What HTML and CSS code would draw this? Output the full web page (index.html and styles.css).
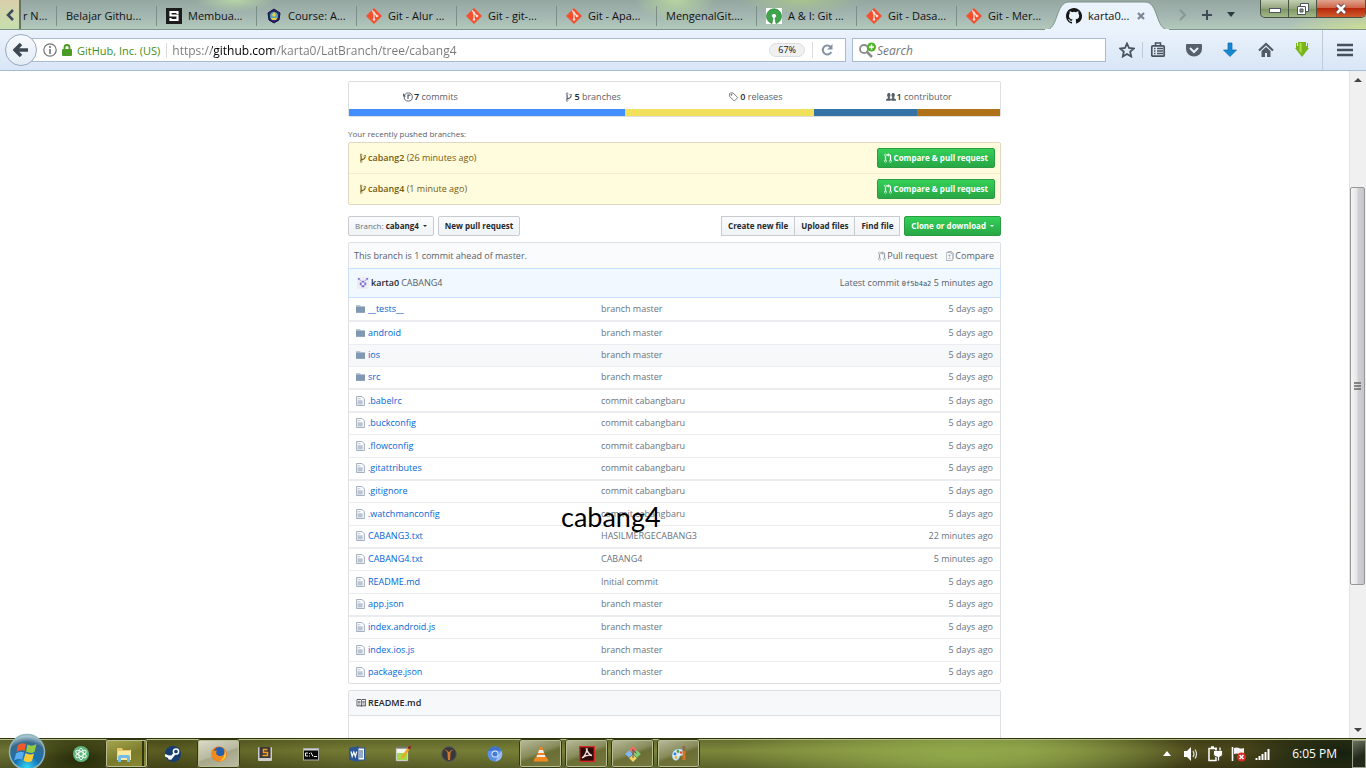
FILE: index.html
```html
<!DOCTYPE html>
<html lang="en">
<head>
<meta charset="utf-8">
<title>karta0/LatBranch at cabang4</title>
<link rel="stylesheet" href="styles.css">
</head>
<body>
<svg class="defs" aria-hidden="true">
  <symbol id="branch" viewBox="0 0 10 16"><path d="M10 5c0-1.110-.89-2-2-2a1.993 1.993 0 0 0-1 3.720v.3c-.02.520-.230.980-.630 1.380-.4.4-.860.610-1.380.630-.830.020-1.480.160-2 .450V4.720a1.993 1.993 0 0 0-1-3.720C.88 1 0 1.890 0 3a2 2 0 0 0 1 1.720v6.560c-.590.350-1 .990-1 1.720 0 1.110.89 2 2 2 1.110 0 2-.89 2-2 0-.530-.2-1-.530-1.360.090-.060.480-.410.590-.470.250-.110.560-.170.940-.170 1.050-.050 1.950-.450 2.750-1.250S8.950 7.770 9 6.730h-.020C9.590 6.370 10 5.730 10 5zM2 1.800c.660 0 1.200.550 1.200 1.200 0 .650-.550 1.200-1.200 1.200C1.350 4.200.8 3.650.8 3c0-.650.550-1.200 1.200-1.200zm0 12.410c-.660 0-1.200-.550-1.200-1.200 0-.650.550-1.200 1.200-1.200.650 0 1.200.550 1.200 1.200 0 .650-.550 1.200-1.200 1.200zm6-8c-.660 0-1.200-.550-1.200-1.200 0-.650.550-1.200 1.200-1.200.650 0 1.200.550 1.200 1.200 0 .650-.550 1.200-1.200 1.200z"/></symbol>
  <symbol id="pull" viewBox="0 0 12 16"><path d="M11 11.280V5c-.030-.780-.340-1.470-.940-2.060C9.460 2.350 8.780 2.030 8 2H7V0L4 3l3 3V4h1c.270.020.480.110.690.310.210.200.300.420.310.690v6.280A1.993 1.993 0 0 0 10 15a1.993 1.993 0 0 0 1-3.720zm-1 2.920c-.660 0-1.200-.550-1.200-1.200 0-.650.550-1.200 1.200-1.200.650 0 1.200.550 1.200 1.200 0 .650-.550 1.200-1.200 1.200zM4 3c0-1.110-.89-2-2-2a1.993 1.993 0 0 0-1 3.720v6.560A1.993 1.993 0 0 0 2 15a1.993 1.993 0 0 0 1-3.720V4.720c.590-.340 1-.980 1-1.720zm-.8 10c0 .660-.550 1.200-1.200 1.200-.650 0-1.200-.550-1.200-1.200 0-.650.550-1.200 1.200-1.200.650 0 1.200.550 1.200 1.200zM2 4.200C1.340 4.200.8 3.650.8 3c0-.650.550-1.200 1.200-1.200.650 0 1.200.550 1.200 1.200 0 .650-.550 1.200-1.200 1.200z"/></symbol>
  <symbol id="history" viewBox="0 0 16 16"><path d="M7 4h5v2H9v5H7z"/><circle cx="8.500" cy="8" r="6.500" fill="none" stroke="currentColor" stroke-width="1.500"/><path d="M0 2v5h5z"/></symbol>
  <symbol id="tag" viewBox="0 0 16 16"><path fill="none" stroke="currentColor" stroke-width="1.300" d="M1 2.500V7l7.500 7.500L14 9 6.500 1.500H2z"/><circle cx="4" cy="4.500" r="1.300"/></symbol>
  <symbol id="people" viewBox="0 0 16 16"><path d="M0 14v-2l3-2V8C1 6 1.500 1.500 4.500 1.500S8 6 6 8v2l2 1 2-1V8C8 6 8.500 1.500 11.500 1.500S15 6 13 8v2l3 2v2H8.500v-1.500h-1V14z"/></symbol>
  <symbol id="folder" viewBox="0 0 14 14"><path d="M0 1h7v2H0z" opacity=".6"/><path d="M0 3h14v10H0z"/></symbol>
  <symbol id="file" viewBox="0 0 12 14"><path d="M.6.6H8L11.400 4v9.400H.6z" fill="none" stroke="currentColor" stroke-width="1.200"/><path opacity=".6" d="M2 3h4v1.500H2zM2 6h7v6H2z"/></symbol>
  <symbol id="diff" viewBox="0 0 13 16"><path d="M6 7h2v1H6v2H5V8H3V7h2V5h1v2zm-3 6h5v-1H3v1zM7.500 2L11 5.500V15c0 .550-.450 1-1 1H1c-.550 0-1-.450-1-1V3c0-.550.450-1 1-1h6.500zM10 6L7 3H1v12h9V6zM8.500 0H3v1h5l4 4v8h1V4.500L8.500 0z"/></symbol>
  <symbol id="book" viewBox="0 0 16 16"><path d="M3 5h4v1H3V5zm0 3h4V7H3v1zm0 2h4V9H3v1zm11-5h-4v1h4V5zm0 2h-4v1h4V7zm0 2h-4v1h4V9zm2-6v9c0 .550-.450 1-1 1H9.500l-1 1-1-1H2c-.550 0-1-.450-1-1V3c0-.550.450-1 1-1h5.500l1 1 1-1H15c.550 0 1 .450 1 1zM8 3.500L7.500 3H2v9h6V3.500zm7-.5H9.500l-.5.5V12h6V3z"/></symbol>
  <symbol id="git" viewBox="0 0 16 16"><path fill="#f4502f" d="M8 0l8 8-8 8-8-8z"/><path fill="none" stroke="#f3ddd6" stroke-width="1.200" d="M6 2.500l2 2v7M8 5l3 3"/><g fill="#f3ddd6"><circle cx="8" cy="5" r="1.300"/><circle cx="11" cy="8" r="1.300"/><circle cx="8" cy="11.500" r="1.300"/></g></symbol>
</svg>

<header class="tabstrip">
  <button class="scroll-left" aria-label="Scroll tabs left"><svg width="8" height="12" viewBox="0 0 8 12"><path d="M7 1L2 6l5 5" fill="none" stroke="#3d4a5c" stroke-width="2.500"/></svg></button>
  <nav class="tabs" aria-label="Tabs">
    <button class="tab first">r N...</button>
    <button class="tab">Belajar Githu...</button>
    <button class="tab"><svg class="fav" viewBox="0 0 16 16"><rect width="16" height="16" fill="#1c1c1c"/><path d="M11.500 6V4h-7v3.500h7V12h-7v-2" fill="none" stroke="#fff" stroke-width="2.200"/></svg>Membua...</button>
    <button class="tab"><svg class="fav" viewBox="0 0 16 16"><path d="M8 1l6 4-1 7-5 3-5-3-1-7z" fill="#29246c" stroke="#17123d"/><circle cx="8" cy="8" r="4" fill="#58a6b0"/><path d="M8 4l2 3-2 2-2-2zM5 10h6l-1 2H6z" fill="#f0cc3f"/></svg>Course: A...</button>
    <button class="tab"><svg class="fav"><use href="#git"/></svg>Git - Alur ...</button>
    <button class="tab"><svg class="fav"><use href="#git"/></svg>Git - git-...</button>
    <button class="tab"><svg class="fav"><use href="#git"/></svg>Git - Apa...</button>
    <button class="tab">MengenalGit....</button>
    <button class="tab"><svg class="fav" viewBox="0 0 16 16"><rect width="16" height="16" fill="#fff"/><path d="M6 15.500A7.500 7.500 0 1 1 10 15.500L9 10a2.400 2.400 0 1 0-2 0z" fill="#3da64a" stroke="#247a31" stroke-width=".6"/></svg>A &amp; I: Git ...</button>
    <button class="tab"><svg class="fav"><use href="#git"/></svg>Git - Dasa...</button>
    <button class="tab last"><svg class="fav"><use href="#git"/></svg>Git - Mer...</button>
    <div class="tab-active">
      <svg class="tab-shape" viewBox="0 0 124 30" preserveAspectRatio="none"><path d="M0 30C14 30 10 2 24 2h76c14 0 10 28 24 28z" fill="#eaf2fb" stroke="#7f9488"/><path d="M0 30h124" stroke="#eaf2fb" stroke-width="2"/></svg>
      <svg class="fav" viewBox="0 0 16 16"><path fill="#161616" d="M8 0C3.580 0 0 3.580 0 8c0 3.540 2.290 6.530 5.470 7.590.4.070.550-.170.550-.380v-1.490c-2.010.370-2.530-.490-2.690-.940-.090-.230-.480-.940-.820-1.130-.280-.150-.680-.520-.010-.530.630-.010 1.080.580 1.230.820.720 1.210 1.870.870 2.330.660.070-.520.280-.870.510-1.070-1.780-.2-3.640-.890-3.640-3.950 0-.870.310-1.590.820-2.150-.080-.2-.360-1.020.080-2.120 0 0 .670-.210 2.200.820a7.500 7.500 0 0 1 4 0c1.530-1.040 2.200-.820 2.200-.820.440 1.100.160 1.920.080 2.120.510.560.820 1.270.820 2.150 0 3.070-1.870 3.750-3.650 3.950.290.250.540.730.540 1.480v2.200c0 .210.150.460.550.380A8 8 0 0 0 8 0z"/></svg>
      <span class="tab-title">karta0...</span>
      <button class="tab-close" aria-label="Close tab"><svg width="8" height="8" viewBox="0 0 8 8"><path d="M1 1l6 6M7 1L1 7" stroke="#7c8796" stroke-width="2.200"/></svg></button>
    </div>
  </nav>
  <div class="tab-tools">
    <svg width="8" height="12" viewBox="0 0 8 12"><path d="M1 1l5 5-5 5" fill="none" stroke="#88978f" stroke-width="2"/></svg>
    <button aria-label="New tab"><svg width="10" height="10" viewBox="0 0 10 10"><path d="M5 0v10M0 5h10" stroke="#3f4c55" stroke-width="2"/></svg></button>
    <button aria-label="List all tabs"><svg width="8" height="5" viewBox="0 0 8 5"><path d="M0 0h8L4 5z" fill="#2e3a40"/></svg></button>
  </div>
  <div class="window-buttons">
    <button aria-label="Minimize"><svg width="14" height="14" viewBox="0 0 14 14"><rect x="1.500" y="6.500" width="11" height="4" fill="#fff" stroke="#4d5560"/></svg></button>
    <button aria-label="Restore"><svg width="14" height="14" viewBox="0 0 14 14"><path d="M4.500 1.500h8v8h-8z" fill="#fff" stroke="#4d5560"/><path d="M1.500 4.500h8v8h-8z" fill="#fff" stroke="#4d5560"/><path d="M4 7h3v3H4z" fill="#8a9a70" stroke="#4d5560"/></svg></button>
    <button class="close" aria-label="Close window"><svg width="14" height="12" viewBox="0 0 14 12"><path d="M3 2l8 8M11 2l-8 8" stroke="#5b3a40" stroke-width="4.500"/><path d="M3 2l8 8M11 2l-8 8" stroke="#fff" stroke-width="2.600"/></svg></button>
  </div>
</header>

<div class="navbar">
  <button class="back" aria-label="Back"><svg width="16" height="14" viewBox="0 0 16 14"><path d="M15 7H4M8 1L2 7l6 6" fill="none" stroke="#3d4853" stroke-width="3.500"/></svg></button>
  <div class="urlbar">
    <svg width="14" height="14" viewBox="0 0 14 14"><circle cx="7" cy="7" r="6.200" fill="none" stroke="#737373" stroke-width="1.200"/><path d="M7 3v2M7 6v5" stroke="#737373" stroke-width="1.600"/></svg>
    <svg width="10" height="12" viewBox="0 0 10 12"><path d="M2.500 6V3.500a2.500 2.500 0 0 1 5 0V6" fill="none" stroke="#4b9a26" stroke-width="1.800"/><rect y="5" width="10" height="7" rx="1" fill="#4b9a26"/></svg>
    <span class="identity">GitHub, Inc. (US)</span>
    <input class="url" type="text" aria-label="Address" value="https://github.com/karta0/LatBranch/tree/cabang4">
    <button class="zoom">67%</button>
    <button class="reload" aria-label="Reload"><svg width="12" height="12" viewBox="0 0 12 12"><path d="M9.500 2.800A4.500 4.500 0 1 0 10.300 8" fill="none" stroke="#8592a3" stroke-width="2"/><path d="M11.500 0v5.500H6z" fill="#8592a3"/></svg></button>
  </div>
  <label class="searchbar">
    <svg width="18" height="16" viewBox="0 0 18 16"><circle cx="5" cy="7" r="4" fill="none" stroke="#8b8b8b" stroke-width="1.800"/><path d="M8 10l5 5" stroke="#8b8b8b" stroke-width="2.500"/><circle cx="12.500" cy="5" r="4.500" fill="#4fb32a"/><path d="M12.500 2.500v5M10 5h5" stroke="#fff" stroke-width="1.500"/></svg>
    <input type="search" placeholder="Search" aria-label="Search">
  </label>
  <div class="nav-tools">
    <button aria-label="Bookmark"><svg viewBox="0 0 16 16"><path d="M8 1.500l2 4.500 4.800.5-3.600 3.200 1 4.800L8 12l-4.200 2.500 1-4.800L1.200 6.500 6 6z" fill="none" stroke="#47525e" stroke-width="1.800"/></svg></button>
    <button class="list" aria-label="Bookmarks list"><svg viewBox="0 0 16 16"><path d="M5.500 3V1h5v2" fill="none" stroke="#47525e" stroke-width="1.600"/><rect x="1.800" y="3.800" width="12.400" height="10.400" rx="1" fill="none" stroke="#47525e" stroke-width="1.700"/><path d="M4 6.500h1.500M7 6.500h6M4 9h1.500M7 9h6M4 11.500h1.500M7 11.500h6" stroke="#47525e" stroke-width="1.300"/></svg></button>
    <button aria-label="Pocket"><svg viewBox="0 0 16 16"><path d="M1 2h14q1 0 1 1v4a8 7.500 0 0 1-16 0V3q0-1 1-1z" fill="#56606c"/><path d="M4 6l4 4 4-4" fill="none" stroke="#e6effa" stroke-width="2"/></svg></button>
    <button aria-label="Downloads"><svg viewBox="0 0 16 16"><path d="M6 1h4v7h4.500L8 14.500 1.500 8H6z" fill="#1489d3" stroke="#0d66a8" stroke-width=".7"/></svg></button>
    <button aria-label="Home"><svg viewBox="0 0 16 16"><path d="M1 8.500L8 2l7 6.500" fill="none" stroke="#505b67" stroke-width="2.200"/><path d="M3.500 9L8 5l4.500 4v6H9v-4H7v4H3.500z" fill="#505b67"/></svg></button>
    <button aria-label="Download helper"><svg viewBox="0 0 16 16"><path d="M2 1v5H1l7 9 7-9h-1V1h-1v3h-1V0H4v4H3V1z" fill="#78b41b"/><path d="M5.500 1h2v10l-2-2z" fill="#b5dd45"/></svg></button>
    <button class="menu" aria-label="Menu"><svg viewBox="0 0 16 16"><path d="M0 3h16M0 8h16M0 13h16" stroke="#46515d" stroke-width="2.600"/></svg></button>
  </div>
</div>

<main class="viewport">
  <div class="page">
    <section class="summary">
      <ul class="stats">
        <li><svg class="oct wide"><use href="#history"/></svg><a href="#"><b>7</b> commits</a></li>
        <li><svg class="oct"><use href="#branch"/></svg><a href="#"><b>5</b> branches</a></li>
        <li><svg class="oct wide"><use href="#tag"/></svg><a href="#"><b>0</b> releases</a></li>
        <li><svg class="oct wide"><use href="#people"/></svg><a href="#"><b>1</b> contributor</a></li>
      </ul>
      <div class="langs"><span class="l1"></span><span class="l2"></span><span class="l3"></span><span class="l4"></span></div>
    </section>

    <h2 class="recent-title">Your recently pushed branches:</h2>
    <ul class="recent">
      <li><svg class="oct"><use href="#branch"/></svg><a href="#"><b>cabang2</b> (26 minutes ago)</a><button class="btn green"><svg class="oct"><use href="#pull"/></svg>Compare &amp; pull request</button></li>
      <li><svg class="oct"><use href="#branch"/></svg><a href="#"><b>cabang4</b> (1 minute ago)</a><button class="btn green"><svg class="oct"><use href="#pull"/></svg>Compare &amp; pull request</button></li>
    </ul>

    <div class="actions">
      <button class="btn"><span class="light">Branch:</span> cabang4<i class="caret"></i></button>
      <button class="btn">New pull request</button>
      <div class="group"><button class="btn">Create new file</button><button class="btn">Upload files</button><button class="btn">Find file</button></div>
      <button class="btn green">Clone or download<i class="caret"></i></button>
    </div>

    <section class="files">
      <div class="ahead"><span>This branch is 1 commit ahead of master.</span><a href="#"><svg class="oct"><use href="#pull"/></svg>Pull request</a><a href="#"><svg class="oct"><use href="#diff"/></svg>Compare</a></div>
      <div class="tease"><svg class="avatar" viewBox="0 0 13 13"><rect width="13" height="13" fill="#eeeef1"/><path d="M1 1h2v2H1zM10 1h2v2h-2zM3 3h1v1H3zM9 3h1v1H9zM5 4h3v2H5zM3 6h2v3H3zM8 6h2v3H8zM5 9h3v2H5z" fill="#7d70d6"/></svg><b>karta0</b><span>CABANG4</span><span class="latest">Latest commit <code>0f5b4a2</code> 5 minutes ago</span></div>
      <table>
        <tbody>
          <tr class="thick"><td><svg class="oct dir"><use href="#folder"/></svg><a href="#">__tests__</a></td><td>branch master</td><td>5 days ago</td></tr>
          <tr><td><svg class="oct dir"><use href="#folder"/></svg><a href="#">android</a></td><td>branch master</td><td>5 days ago</td></tr>
          <tr class="hover"><td><svg class="oct dir"><use href="#folder"/></svg><a href="#">ios</a></td><td>branch master</td><td>5 days ago</td></tr>
          <tr class="thick"><td><svg class="oct dir"><use href="#folder"/></svg><a href="#">src</a></td><td>branch master</td><td>5 days ago</td></tr>
          <tr class="thick"><td><svg class="oct doc"><use href="#file"/></svg><a href="#">.babelrc</a></td><td>commit cabangbaru</td><td>5 days ago</td></tr>
          <tr><td><svg class="oct doc"><use href="#file"/></svg><a href="#">.buckconfig</a></td><td>commit cabangbaru</td><td>5 days ago</td></tr>
          <tr><td><svg class="oct doc"><use href="#file"/></svg><a href="#">.flowconfig</a></td><td>commit cabangbaru</td><td>5 days ago</td></tr>
          <tr class="thick"><td><svg class="oct doc"><use href="#file"/></svg><a href="#">.gitattributes</a></td><td>commit cabangbaru</td><td>5 days ago</td></tr>
          <tr><td><svg class="oct doc"><use href="#file"/></svg><a href="#">.gitignore</a></td><td>commit cabangbaru</td><td>5 days ago</td></tr>
          <tr><td><svg class="oct doc"><use href="#file"/></svg><a href="#">.watchmanconfig</a></td><td>commit cabangbaru</td><td>5 days ago</td></tr>
          <tr class="thick"><td><svg class="oct doc"><use href="#file"/></svg><a href="#">CABANG3.txt</a></td><td>HASILMERGECABANG3</td><td>22 minutes ago</td></tr>
          <tr><td><svg class="oct doc"><use href="#file"/></svg><a href="#">CABANG4.txt</a></td><td>CABANG4</td><td>5 minutes ago</td></tr>
          <tr><td><svg class="oct doc"><use href="#file"/></svg><a href="#">README.md</a></td><td>Initial commit</td><td>5 days ago</td></tr>
          <tr class="thick"><td><svg class="oct doc"><use href="#file"/></svg><a href="#">app.json</a></td><td>branch master</td><td>5 days ago</td></tr>
          <tr><td><svg class="oct doc"><use href="#file"/></svg><a href="#">index.android.js</a></td><td>branch master</td><td>5 days ago</td></tr>
          <tr><td><svg class="oct doc"><use href="#file"/></svg><a href="#">index.ios.js</a></td><td>branch master</td><td>5 days ago</td></tr>
          <tr><td><svg class="oct doc"><use href="#file"/></svg><a href="#">package.json</a></td><td>branch master</td><td>5 days ago</td></tr>
        </tbody>
      </table>
      <span class="annotation">cabang4</span>
    </section>

    <section class="readme"><h3><svg class="oct wide"><use href="#book"/></svg>README.md</h3></section>
  </div>
  <div class="scrollbar" aria-hidden="true">
    <svg width="8" height="4" viewBox="0 0 8 4"><path d="M0 4h8L4 0z" fill="#444"/></svg>
    <div class="track"><div class="thumb"><svg width="7" height="8" viewBox="0 0 7 8"><path d="M0 1h7M0 4h7M0 7h7" stroke="#666" stroke-width="1.500"/></svg></div></div>
    <svg width="8" height="4" viewBox="0 0 8 4"><path d="M0 0h8L4 4z" fill="#444"/></svg>
  </div>
</main>

<footer class="taskbar">
  <button class="start" aria-label="Start"><svg viewBox="0 0 38 38">
    <defs><radialGradient id="orb" cx=".5" cy=".95" r=".9"><stop offset="0" stop-color="#35d8f8"/><stop offset=".4" stop-color="#1672b4"/><stop offset=".8" stop-color="#3a6a8a"/><stop offset="1" stop-color="#a8c4cf"/></radialGradient></defs>
    <circle cx="19" cy="19" r="17.500" fill="url(#orb)" stroke="#8fb6bd" stroke-width="1.500"/>
    <path d="M10 12q4-3 8-1l-1.500 7q-4-2-8 1z" fill="#ee5a2a"/><path d="M19.500 11.500q4 2.500 9-.5l-2 8q-4 2-8.500-.5z" fill="#94c943"/><path d="M8 20.500q4-3 8-1l-1.800 7q-4-2-8 1z" fill="#59aef2"/><path d="M17.500 20q4 2.500 8.500.5l-2 7.500q-4 2.500-8.500-.5z" fill="#fccb35"/></svg></button>
  <div class="apps">
    <button aria-label="Atom"><svg viewBox="0 0 16 16"><circle cx="8" cy="8" r="8" fill="#5fb57d"/><g fill="none" stroke="#eefaf1"><ellipse cx="8" cy="8" rx="2.200" ry="5.800"/><ellipse cx="8" cy="8" rx="2.200" ry="5.800" transform="rotate(60 8 8)"/><ellipse cx="8" cy="8" rx="2.200" ry="5.800" transform="rotate(120 8 8)"/></g></svg></button>
    <button class="open stack" aria-label="Explorer"><svg viewBox="0 0 16 16"><path d="M1 2h5l1 2h8v10H1z" fill="#e8c764"/><path d="M2 5h12l1-2v11H1z" fill="#fbe9a4"/><path d="M2 16v-5q0-2 2-2h8q2 0 2 2v5h-3v-4H5v4z" fill="#72bce6"/></svg></button>
    <button aria-label="Steam"><svg viewBox="0 0 16 16"><circle cx="8" cy="8" r="8" fill="#173d72"/><path d="M0 9l6 3 4-5" fill="none" stroke="#fff" stroke-width="2.500"/><circle cx="11" cy="5.500" r="2.600" fill="#173d72" stroke="#fff" stroke-width="1.500"/><circle cx="5" cy="11.500" r="2.200" fill="#fff"/></svg></button>
    <button class="open active" aria-label="Firefox"><svg viewBox="0 0 16 16"><circle cx="8" cy="8" r="7.500" fill="#e66a17"/><circle cx="8.500" cy="6.500" r="5.500" fill="#2161b0"/><path d="M1 3l2 2 3-.5Q4 8 7 9.500t6-1q1-4-1-6.500 6 5 2.500 11Q10 17 4 14-1 10 1 3z" fill="#f48a1d"/><path d="M14 5q3 8-5 10 5-3 5-10z" fill="#ffd043"/></svg></button>
    <button aria-label="Sublime Text"><svg viewBox="0 0 16 16"><rect x="1" y="1" width="14" height="14" rx="1" fill="#ccc"/><rect x="2.500" y="1" width="11" height="11" fill="#3b3936"/><path d="M10.500 3.500h-4v3h4v3h-5" fill="none" stroke="#f69a2d" stroke-width="1.500"/></svg></button>
    <button aria-label="Command Prompt"><svg viewBox="0 0 16 16"><rect x=".5" y="2.500" width="15" height="11.500" fill="#090909" stroke="#aaa"/><path d="M1 3h14v1.500H1z" fill="#d0d4d8"/><path d="M5 7H2.500v3H5M6.500 7v1M6.500 9.500v1M8 6.500l2 4M11 10.500h3" fill="none" stroke="#eee"/></svg></button>
    <button aria-label="Word"><svg viewBox="0 0 16 16"><rect x="8" y="2" width="7.500" height="12" fill="#fff" stroke="#2b5797"/><path d="M10 5h4M10 7h4M10 9h4M10 11h4" stroke="#2b5797"/><path d="M0 2l9.500-2v16L0 14z" fill="#2b5797"/><path d="M2 5.500l1.200 5L4.800 6l1.600 4.500L7.700 5.500" fill="none" stroke="#fff" stroke-width="1.200"/></svg></button>
    <button aria-label="Notepad++"><svg viewBox="0 0 16 16"><path d="M1 2h12v13H1z" fill="#f5f5f0" stroke="#888" stroke-width=".7"/><path d="M2 7h10v7H2z" fill="#a4d94c"/><path d="M3 0v3M5 0v3M7 0v3M9 0v3M11 0v3" stroke="#777"/><path d="M7 12l7-10" stroke="#eba820" stroke-width="2.500"/><path d="M13.500 3l2-3" stroke="#942525" stroke-width="2.500"/></svg></button>
    <button aria-label="Launcher"><svg viewBox="0 0 16 16"><circle cx="8" cy="8" r="7.300" fill="#38383a" stroke="#55555a"/><path d="M3 4q3 0 3.500 3L7 14h2l.5-7Q10 4 13 4q-3-1-4 1.500L8 6 7 5.500Q6 3 3 4z" fill="#d4792b"/></svg></button>
    <button aria-label="Chromium"><svg viewBox="0 0 16 16"><circle cx="8" cy="8" r="7.500" fill="#5c91e6"/><path d="M1 5a7.500 7.500 0 0 1 13.500-.5H8z" fill="#3f72c8"/><path d="M14.500 5a7.500 7.500 0 0 1-6 10.500L11 9z" fill="#98bcf5"/><circle cx="8" cy="8" r="3.500" fill="#e8f0fc"/><circle cx="8" cy="8" r="2.600" fill="#447ad6"/></svg></button>
    <button class="open" aria-label="VLC"><svg viewBox="0 0 16 16"><path d="M7 1h2l4 11H3z" fill="#f5821f"/><path d="M6 4h4l1 3H5zM4.200 9h7.600l.8 2H3.400z" fill="#efefef"/><path d="M2 11.500h12l1.500 4H.5z" fill="#f18a21"/></svg></button>
    <button class="open" aria-label="Adobe Reader"><svg viewBox="0 0 16 16"><rect x=".7" y=".7" width="14.600" height="14.600" fill="#2c0b0a" stroke="#d52a25" stroke-width="1.400"/><path d="M7.500 3q1.500 5 5.500 6.500Q8 8 3 12q4-3 5-9z" fill="none" stroke="#f3dedd" stroke-width="1.400"/></svg></button>
    <button class="open" aria-label="Git Bash"><svg viewBox="0 0 16 16"><path d="M8 0l3.800 3.800L8 7.600 4.200 3.800z" fill="#ec6f65"/><path d="M4 4.200L7.800 8 4 11.800.2 8z" fill="#7fb6f5"/><path d="M12 4.200L15.800 8 12 11.800 8.200 8z" fill="#83cb76"/><path d="M8 8.400l3.800 3.800L8 16l-3.800-3.800z" fill="#f2d366"/><path d="M8 3v9M8 4l3.500 3.500" stroke="#555" fill="none"/></svg></button>
    <button class="open" aria-label="Paint"><svg viewBox="0 0 16 16"><path d="M1 9q1-6 7-6t5 5q-1 2-4 2-1 4-4 4.500Q1 14 1 9z" fill="#d6edfa" stroke="#7bacc6" stroke-width=".6"/><circle cx="4" cy="8" r="1.400" fill="#4077cd"/><circle cx="7" cy="5.500" r="1.400" fill="#49a44b"/><circle cx="10" cy="6.500" r="1.300" fill="#e34d3b"/><circle cx="5" cy="11.500" r="1.400" fill="#e9b634"/><path d="M13 5v9" stroke="#d77420" stroke-width="3"/><path d="M13 0v5" stroke="#8c6c4b" stroke-width="3"/></svg></button>
  </div>
  <div class="tray">
    <svg width="8" height="5" viewBox="0 0 8 5"><path d="M0 5h8L4 0z" fill="#fff"/></svg>
    <svg viewBox="0 0 16 16"><path d="M1 5h3l4-4v14l-4-4H1z" fill="#fff"/><path d="M10 5q2 3 0 6M12 3.500q3 4.500 0 9" fill="none" stroke="#ddd" stroke-width="1.200"/></svg>
    <svg viewBox="0 0 16 16"><path d="M2 2.500h7v12H2zM4 1h3" fill="none" stroke="#fff" stroke-width="1.500"/><path d="M6.500 4.500h9V8q0 3-3 3v4h-2v-4q-4 0-4-3z" fill="#fff" stroke="#3c3c18" stroke-width=".8"/><path d="M9 1.500v3M13 1.500v3" stroke="#fff" stroke-width="1.300"/></svg>
    <svg viewBox="0 0 16 16"><path d="M1.500 1v14" stroke="#fff" stroke-width="1.600"/><path d="M3 2q3-1 5 0t5 0v6q-3 1-5 0T3 8z" fill="#f4f4f4"/><circle cx="10.500" cy="11" r="4.500" fill="#dc2a24"/><path d="M8.500 9l4 4M12.500 9l-4 4" stroke="#fff" stroke-width="1.500"/></svg>
    <svg viewBox="0 0 16 16"><path d="M1.500 14v-2M4.500 14v-4M7.500 14V8M10.500 14V6M13.500 14V3" stroke="#fff" stroke-width="2"/></svg>
    <time>6:05 PM</time>
    <button class="show-desktop" aria-label="Show desktop"></button>
  </div>
</footer>
</body>
</html>
```

FILE: styles.css
```css
* { box-sizing: border-box; }
body {
  margin: 0;
  height: 100vh;
  display: flex;
  flex-direction: column;
  overflow: hidden;
  background: #fff;
  font-family: "Open Sans", "Noto Sans", sans-serif;
  font-size: 11px;
  color: #111;
}
button { font: inherit; color: inherit; background: none; border: 0; padding: 0; margin: 0; }
a { text-decoration: none; color: inherit; }
ul { list-style: none; margin: 0; padding: 0; }
svg { flex: none; fill: currentColor; }
.defs { display: none; }

/* tab strip */
.tabstrip {
  display: flex;
  height: 30px;
  flex: none;
  border-bottom: 1px solid #7f9488;
  background:
    radial-gradient(ellipse 40px 12px at 235px 0, #b6d5a8, transparent),
    radial-gradient(ellipse 40px 22px at 675px 0, #b6d5a0, transparent),
    radial-gradient(ellipse 60px 14px at 800px 0, #a9c590, transparent),
    radial-gradient(ellipse 80px 20px at 100% 100%, #cbdd94, transparent),
    linear-gradient(#95a7a0, #a2b5b0 50%, #b3c9bb);
}
.scroll-left {
  width: 21px;
  display: flex;
  align-items: center;
  justify-content: center;
  border-right: 2px solid #66755f;
  background: linear-gradient(#d9cfaa, #c6dfae);
}
.tabs { display: flex; }
.tab {
  width: 100px;
  display: flex;
  align-items: center;
  gap: 6px;
  padding: 2px 0 0 9px;
  white-space: nowrap;
  background: linear-gradient(#7d8f89, #7d8f89) right 6px / 1px 20px no-repeat;
}
.tab.first { width: 36px; padding-left: 2px; }
.tab.last { background: none; }
.fav { width: 16px; height: 16px; }
.tab-active {
  position: relative;
  width: 110px;
  display: flex;
  align-items: center;
  gap: 6px;
  padding: 2px 0 0 9px;
}
.tab-active > * { position: relative; }
.tab-active .tab-shape { position: absolute; left: -12px; top: 0; width: 124px; height: 30px; }
.tab-close { margin-left: 2px; display: flex; }
.tab-tools { display: flex; align-items: center; gap: 15px; padding: 0 0 0 12px; }
.tab-tools button { display: flex; }
.window-buttons {
  display: flex;
  margin-left: auto;
  height: 18px;
  border: 1px solid #475444;
  border-top: 0;
  border-radius: 0 0 5px 5px;
  overflow: hidden;
  background: linear-gradient(#c3d0b4, #93a57c 50%, #7d9360 51%, #a4b98a);
}
.window-buttons button {
  width: 28px;
  display: flex;
  align-items: center;
  justify-content: center;
  border-right: 1px solid #475444;
}
.window-buttons .close { width: 48px; border: 0; background: linear-gradient(#e0a48f, #cf6145 48%, #b8280b 50%, #cf5c2a); }

/* navigation bar */
.navbar {
  display: flex;
  align-items: center;
  height: 41px;
  flex: none;
  padding: 0 13px 0 5px;
  border-bottom: 1px solid #a5bad3;
  background: linear-gradient(#eaf2fb, #d9e6f6);
}
.back {
  position: relative;
  z-index: 1;
  width: 32px;
  height: 32px;
  display: flex;
  align-items: center;
  justify-content: center;
  border: 1px solid #96a9bf;
  border-radius: 50%;
  background: linear-gradient(#f7fafd, #e3ecf6);
}
.urlbar {
  flex: 802;
  min-width: 0;
  height: 24px;
  margin-left: -8px;
  display: flex;
  align-items: center;
  gap: 5px;
  padding-left: 13px;
  border: 1px solid #a8bbd1;
  background: #fff;
}
.identity { color: #3f8f1c; padding-right: 6px; border-right: 1px solid #dcdcdc; white-space: nowrap; }
input { font: inherit; border: 0; outline: 0; padding: 0; background: none; min-width: 0; }
.url {
  flex: 1;
  font-size: 12px;
  color: transparent;
  background: linear-gradient(90deg, #777 40px, #000 40px, #000 102px, #777 102px);
  background-clip: text;
}
.zoom { padding: 0 8px; border: 1px solid #ddd; border-radius: 8px; background: #f0f0f0; font-size: 9px; line-height: 12px; }
.reload { margin-left: 2px; padding: 0 12px 0 8px; border-left: 1px solid #dcdcdc; height: 16px; display: flex; align-items: center; }
.searchbar {
  flex: 240;
  min-width: 0;
  height: 24px;
  margin-left: 6px;
  display: flex;
  align-items: center;
  padding: 0 6px;
  border: 1px solid #a8bbd1;
  background: #fff;
}
.searchbar input { flex: 1; font-size: 12px; }
.searchbar input::placeholder { color: #777; font-style: italic; }
.nav-tools { display: flex; align-items: center; padding-left: 13px; }
.nav-tools button { display: flex; margin-right: 20px; }
.nav-tools button svg { width: 16px; height: 16px; }
.nav-tools button:first-child { margin-right: 7px; padding-right: 0; }
.nav-tools .list { border-left: 1px solid #bccbdc; padding-left: 7px; }
.nav-tools .menu { margin: 0; margin-left: -8px; padding: 12px 0 12px 14px; border-left: 1px solid #bccbdc; }

/* page */
.viewport { flex: 1; min-height: 0; display: flex; overflow: hidden; }
.page {
  width: 653px;
  margin: 0 auto;
  padding-top: 10px;
  font-size: 9px;
  line-height: 14px;
  color: #586069;
}
.page b { color: #24292e; font-weight: 600; }
.oct { width: 8px; height: 10px; }
.oct.wide { width: 10px; }
.summary { border: 1px solid #dddfe2; border-radius: 2px; }
.stats { display: grid; grid-template-columns: repeat(4, 1fr); }
.stats li { display: flex; justify-content: center; align-items: center; gap: 1px; height: 27px; padding-top: 2px; }
.langs { display: flex; height: 7px; }
.l1 { flex: 276; background: #438eff; }
.l2 { flex: 189; background: #f1e05a; }
.l3 { flex: 103; background: #3572a5; }
.l4 { flex: 83; background: #b07219; }
.recent-title { margin: 10px 0 1px; font-size: 8px; font-weight: 400; line-height: 14px; }
.recent { border: 1px solid #dfd8c2; border-radius: 2px; background: #fffbdd; color: #735c0f; }
.recent b { color: #735c0f; }
.recent li { display: flex; align-items: center; gap: 1px; height: 31px; padding: 0 5px 0 10px; }
.recent li:first-child { height: 30px; }
.recent li + li { border-top: 1px solid #f2ecc7; }
.recent .btn { margin-left: auto; }
.btn {
  display: flex;
  align-items: center;
  gap: 2px;
  height: 20px;
  padding: 0 6px;
  border: 1px solid #c9cbce;
  border-radius: 2px;
  background: linear-gradient(#fafbfc, #eff3f6);
  color: #24292e;
  font-size: 8px;
  font-weight: 700;
  white-space: nowrap;
}
.btn.green { border-color: #2a9c43; background: linear-gradient(#34d058, #28a745); color: #fff; }
.light { color: #6a737d; font-weight: 400; }
.caret { margin-left: 2px; border: 2px solid transparent; border-top-color: currentColor; border-bottom: 0; }
.actions { display: flex; gap: 4px; margin: 11px 0 6px; }
.group { display: flex; margin-left: auto; }
.group .btn { border-radius: 0; }
.group .btn + .btn { margin-left: -1px; }
.files { position: relative; border: 1px solid #dddfe2; border-radius: 2px; }
.ahead { display: flex; align-items: center; height: 25px; padding: 0 6px 0 5px; background: #fafbfc; }
.ahead span { margin-right: auto; }
.ahead a { display: flex; align-items: center; gap: 1px; margin-left: 9px; }
.ahead svg { color: #999fa6; }
.tease {
  display: flex;
  align-items: center;
  gap: 2px;
  height: 30px;
  margin: 0 -1px;
  padding: 0 7px 0 8px;
  border: 1px solid #c8e1ff;
  background: #f1f8ff;
}
.tease b + span { margin-right: auto; }
.avatar { width: 12px; height: 12px; }
code { font-family: "DejaVu Sans Mono", monospace; font-size: 7px; color: #444d56; }
table { width: 100%; border-collapse: collapse; table-layout: fixed; }
td { height: 23px; padding: 0; border-bottom: 1px solid #eaecef; color: #6a737d; }
tr:nth-child(3n) td, tr:last-child td { height: 22px; }
tr:last-child td { border-bottom: 0; }
.thick td { border-bottom: 2px solid #eaecef; }
.hover td { background: #f6f8fa; }
td:first-child { width: 252px; padding-left: 7px; }
td:last-child { width: 120px; padding-right: 7px; text-align: right; }
td a { color: #0366d6; margin-left: 3px; }
td svg { vertical-align: -2px; }
.dir { width: 9px; color: #8198b3; }
.doc { width: 9px; color: #8d9db0; }
.annotation {
  position: absolute;
  left: 212px;
  top: 256px;
  font-family: Lato, sans-serif;
  font-size: 27px;
  line-height: 36px;
  color: #000;
}
.readme { margin-top: 6px; height: 100px; border: 1px solid #dddfe2; border-radius: 2px; }
.readme h3 {
  display: flex;
  align-items: center;
  gap: 2px;
  height: 25px;
  margin: 0;
  padding-left: 7px;
  border-bottom: 1px solid #dddfe2;
  background: #f6f8fa;
  color: #24292e;
  font-size: 9px;
  font-weight: 600;
}
.scrollbar {
  width: 17px;
  flex: none;
  display: flex;
  flex-direction: column;
  align-items: center;
  padding: 7px 1px 6px 0;
  border-left: 1px solid #e3e3e3;
  background: #f0f0f0;
}
.track { flex: 1; align-self: stretch; display: grid; grid-template-rows: 105fr 397fr 143fr; }
.thumb {
  grid-row: 2;
  display: flex;
  align-items: center;
  justify-content: center;
  border: 1px solid #979797;
  border-radius: 2px;
  background: linear-gradient(90deg, #f5f5f5, #e6e6e8 45%, #cfcfd4 55%, #c5c5cc);
}

/* taskbar */
.taskbar {
  height: 30px;
  flex: none;
  display: flex;
  padding-left: 8px;
  border-top: 1px solid #2c3210;
  box-shadow: inset 0 1px #b5bf83;
  background:
    radial-gradient(ellipse 70px 30px at 80px 20px, #252b08, transparent),
    radial-gradient(ellipse 230px 40px at 960px 50%, #91a84a, transparent),
    radial-gradient(ellipse 100px 30px at 1340px 50%, #14200f, transparent),
    linear-gradient(#0003, transparent 40%, #0004),
    linear-gradient(90deg, #6e7434, #5a5c20 12%, #747a33 25%, #7b8539 50%, #8b9a45 75%, #4e4a1c 88%, #423f18);
}
.start { position: relative; width: 38px; height: 38px; margin-top: -6px; display: flex; }
.start svg { width: 38px; height: 38px; }
.apps { display: flex; padding-left: 13px; gap: 3px; }
.apps button { width: 43px; height: 29px; display: flex; align-items: center; justify-content: center; border: 1px solid transparent; }
.apps svg { width: 16px; height: 16px; }
.apps .open {
  border-color: #d3d6b0;
  border-radius: 3px;
  outline: 1px solid #33380f;
  outline-offset: -1px;
  box-shadow: inset 0 0 0 1px #b9bd93;
  background: linear-gradient(160deg, #b9bc9d, #888b5a 45%, #6b6f35 55%, #74783f);
}
.apps .active { background: linear-gradient(160deg, #deddcc, #b9b8a0 50%, #a6a68a 55%, #bcbca6); }
.apps .stack { background: linear-gradient(90deg, transparent 36px, #30340f 36px 38px, transparent 38px), linear-gradient(160deg, #a9a850, #7a7a2c 55%, #8d8a30); padding-right: 5px; }
.tray { margin-left: auto; display: flex; align-items: center; gap: 8px; color: #fff; }
.tray svg:not([width]) { width: 16px; height: 16px; }
.tray svg:first-child { margin-right: 4px; }
.tray time { margin: 0 7px 0 13px; font-size: 12px; white-space: nowrap; }
.show-desktop { width: 14px; height: 28px; border: 1px solid #9aa18c; background: linear-gradient(150deg, #69715e, #23291b 60%); }
```
